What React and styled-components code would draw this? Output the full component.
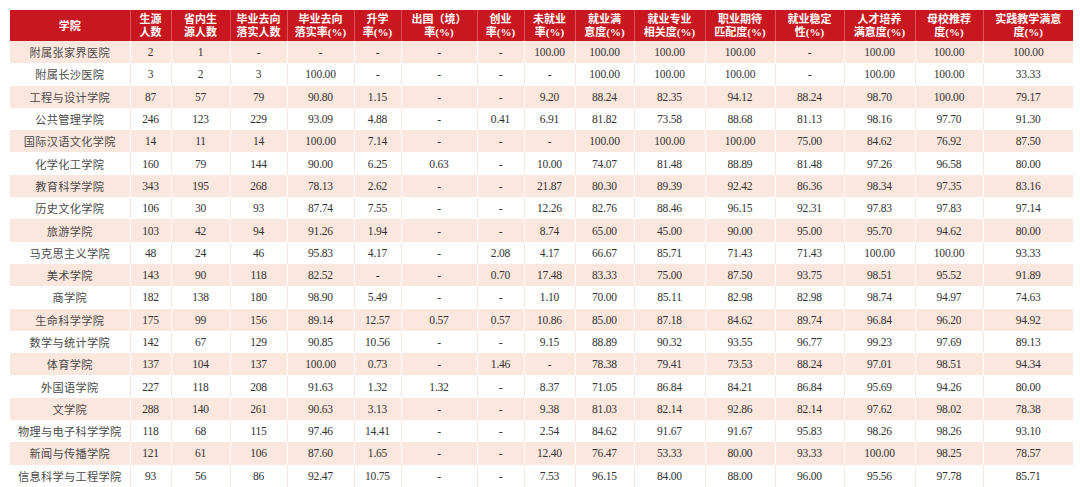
import styled, { createGlobalStyle } from 'styled-components'

const GlobalStyle = createGlobalStyle`
  html, body {
    margin: 0;
    padding: 0;
    background: #fff;
  }
  body {
    font-family: "Liberation Serif", "Noto Sans CJK SC", serif;
  }
`

const Page = styled.div`
  padding: 10px 0 0 10px;
  width: 1080px;
  height: 487px;
  box-sizing: border-box;
  overflow: hidden;
`

const Table = styled.table`
  border-collapse: collapse;
  table-layout: fixed;
  width: 1063px;
`

const HeadCell = styled.th`
  background: #c8171e;
  color: #fff;
  font-family: "Liberation Serif", "Noto Sans CJK SC", serif;
  font-weight: bold;
  font-size: 11px;
  line-height: 13px;
  height: 31px;
  padding: 1px 0 0;
  text-align: center;
  vertical-align: middle;
  border-right: 1px solid #d9555a;
  box-sizing: border-box;
  &:last-child {
    border-right: none;
  }
`

const Row = styled.tr`
  height: 22.3px;
  background: ${props => (props.striped ? '#fce7de' : '#fff')};
`

const Cell = styled.td`
  padding: 0;
  text-align: center;
  vertical-align: middle;
  color: ${props => (props.name ? '#4a4a4a' : '#333')};
  font-family: ${props => (props.name
    ? '"Noto Sans CJK SC", sans-serif'
    : '"Liberation Serif", serif')};
  font-size: ${props => (props.name ? '11.2px' : '11.5px')};
  letter-spacing: ${props => (props.name ? '0.3px' : '-0.2px')};
  white-space: nowrap;
  border-right: 1px solid ${props => (props.striped ? '#fff' : '#fbe6dd')};
  &:last-child {
    border-right: none;
  }
`

const widths = [120, 41, 59, 57, 67, 47, 76, 47, 51, 59, 71, 70, 69, 71, 68, 90]

const headers = [
  ['学院'],
  ['生源', '人数'],
  ['省内生', '源人数'],
  ['毕业去向', '落实人数'],
  ['毕业去向', '落实率(%)'],
  ['升学', '率(%)'],
  ['出国（境）', '率(%)'],
  ['创业', '率(%)'],
  ['未就业', '率(%)'],
  ['就业满', '意度(%)'],
  ['就业专业', '相关度(%)'],
  ['职业期待', '匹配度(%)'],
  ['就业稳定', '性(%)'],
  ['人才培养', '满意度(%)'],
  ['母校推荐', '度(%)'],
  ['实践教学满意', '度(%)'],
]

const rows = [
  '附属张家界医院 2 1 - - - - - 100.00 100.00 100.00 100.00 - 100.00 100.00 100.00',
  '附属长沙医院 3 2 3 100.00 - - - - 100.00 100.00 100.00 - 100.00 100.00 33.33',
  '工程与设计学院 87 57 79 90.80 1.15 - - 9.20 88.24 82.35 94.12 88.24 98.70 100.00 79.17',
  '公共管理学院 246 123 229 93.09 4.88 - 0.41 6.91 81.82 73.58 88.68 81.13 98.16 97.70 91.30',
  '国际汉语文化学院 14 11 14 100.00 7.14 - - - 100.00 100.00 100.00 75.00 84.62 76.92 87.50',
  '化学化工学院 160 79 144 90.00 6.25 0.63 - 10.00 74.07 81.48 88.89 81.48 97.26 96.58 80.00',
  '教育科学学院 343 195 268 78.13 2.62 - - 21.87 80.30 89.39 92.42 86.36 98.34 97.35 83.16',
  '历史文化学院 106 30 93 87.74 7.55 - - 12.26 82.76 88.46 96.15 92.31 97.83 97.83 97.14',
  '旅游学院 103 42 94 91.26 1.94 - - 8.74 65.00 45.00 90.00 95.00 95.70 94.62 80.00',
  '马克思主义学院 48 24 46 95.83 4.17 - 2.08 4.17 66.67 85.71 71.43 71.43 100.00 100.00 93.33',
  '美术学院 143 90 118 82.52 - - 0.70 17.48 83.33 75.00 87.50 93.75 98.51 95.52 91.89',
  '商学院 182 138 180 98.90 5.49 - - 1.10 70.00 85.11 82.98 82.98 98.74 94.97 74.63',
  '生命科学学院 175 99 156 89.14 12.57 0.57 0.57 10.86 85.00 87.18 84.62 89.74 96.84 96.20 94.92',
  '数学与统计学院 142 67 129 90.85 10.56 - - 9.15 88.89 90.32 93.55 96.77 99.23 97.69 89.13',
  '体育学院 137 104 137 100.00 0.73 - 1.46 - 78.38 79.41 73.53 88.24 97.01 98.51 94.34',
  '外国语学院 227 118 208 91.63 1.32 1.32 - 8.37 71.05 86.84 84.21 86.84 95.69 94.26 80.00',
  '文学院 288 140 261 90.63 3.13 - - 9.38 81.03 82.14 92.86 82.14 97.62 98.02 78.38',
  '物理与电子科学学院 118 68 115 97.46 14.41 - - 2.54 84.62 91.67 91.67 95.83 98.26 98.26 93.10',
  '新闻与传播学院 121 61 106 87.60 1.65 - - 12.40 76.47 53.33 80.00 93.33 100.00 98.25 78.57',
  '信息科学与工程学院 93 56 86 92.47 10.75 - - 7.53 96.15 84.00 88.00 96.00 95.56 97.78 85.71',
].map(line => line.split(' '))

export default function App () {
  return (
    <Page>
      <GlobalStyle />
      <Table>
        <colgroup>
          {widths.map((w, i) => <col key={i} style={{ width: w }} />)}
        </colgroup>
        <thead>
          <tr>
            {headers.map((h, i) => (
              <HeadCell key={i}>
                {h[0]}{h[1] && <><br />{h[1]}</>}
              </HeadCell>
            ))}
          </tr>
        </thead>
        <tbody>
          {rows.map((cells, r) => (
            <Row key={r} striped={r % 2 === 0}>
              {cells.map((c, i) => (
                <Cell key={i} name={i === 0} striped={r % 2 === 0}>{c}</Cell>
              ))}
            </Row>
          ))}
        </tbody>
      </Table>
    </Page>
  )
}
